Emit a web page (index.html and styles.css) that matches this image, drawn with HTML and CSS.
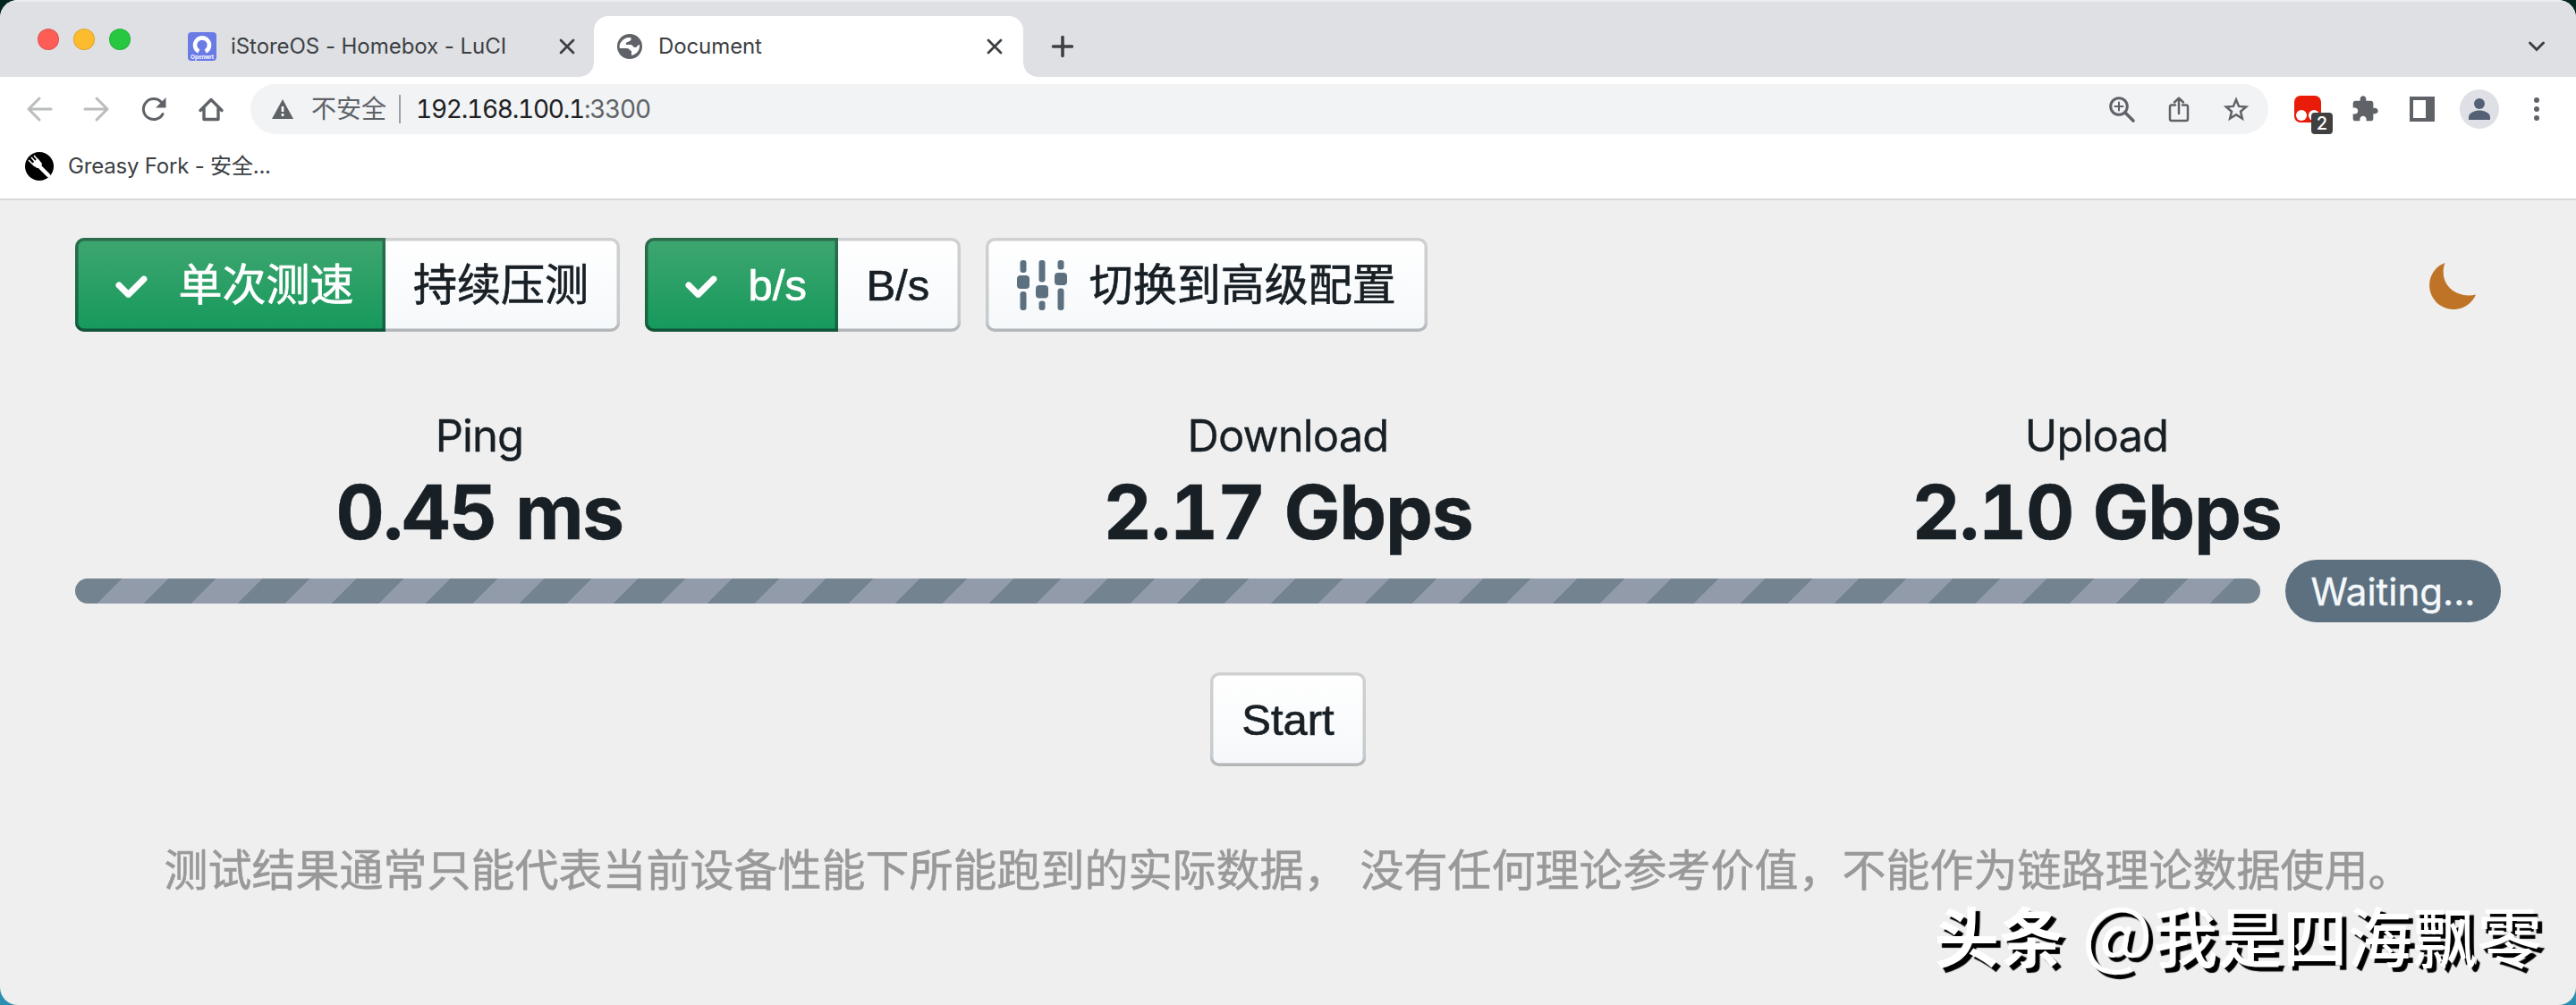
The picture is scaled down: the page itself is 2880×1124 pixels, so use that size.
FILE: index.html
```html
<!DOCTYPE html>
<html lang="zh-CN">
<head>
<meta charset="utf-8">
<title>Document</title>
<link rel="stylesheet" href="styles.css">
</head>
<body>
<div class="window">
  <header class="tabstrip">
    <div class="lights"><i class="light red"></i><i class="light amber"></i><i class="light green"></i></div>
    <div class="tab tab-first">
      <svg class="fav" width="32" height="32" viewBox="0 0 32 32"><rect width="32" height="32" rx="4" fill="#6b7be6"/><path d="M12.300 22.500A8 8 0 1 1 19.700 22.500" fill="none" stroke="#fff" stroke-width="4.600" transform="translate(0 -1)"/><text x="16" y="29.800" text-anchor="middle" font-family="Liberation Sans" font-weight="700" font-size="6.400" fill="#fff">Openwrt</text></svg>
      <span class="tab-title t1">iStoreOS - Homebox - LuCI</span>
      <svg class="close" width="20" height="20" viewBox="0 0 20 20"><path d="M3 3l14 14M17 3L3 17"/></svg>
    </div>
    <div class="tab tab-active">
      <svg class="fav globe" width="32" height="32" viewBox="0 0 32 32"><circle cx="16" cy="16" r="14" fill="#5f6368"/><path d="M14 6C9 7 5 11 4.500 16L5 18H13C16 18 16 21 18 21V26C23 25 27 21 27 16V14C25 13.500 25 17 22 17 19 17 20 14 17 14H12C11 11 14 11 16 10 18 9 18 7 17 6Z" fill="#fff"/></svg>
      <span class="tab-title t2">Document</span>
      <svg class="close" width="20" height="20" viewBox="0 0 20 20"><path d="M3 3l14 14M17 3L3 17"/></svg>
    </div>
    <svg class="plus" width="28" height="28" viewBox="0 0 28 28"><path d="M14 3.500v21M3.500 14h21"/></svg>
    <svg class="chevron" width="20" height="14" viewBox="0 0 20 14"><path d="M2.500 3L10 10.500 17.500 3"/></svg>
  </header>

  <div class="toolbar">
    <nav class="nav">
      <svg class="dim" viewBox="0 0 32 32"><path d="M29 16H4M16 4L4 16l12 12"/></svg>
      <svg class="dim" viewBox="0 0 32 32"><path d="M3 16h25M16 4l12 12-12 12"/></svg>
      <svg viewBox="0 0 32 32"><path d="M26 21.500A11.500 11.500 0 1 1 24.500 8.500"/><path d="M29.500 3v11.500H18z" fill="#5f6368" stroke="none"/></svg>
      <svg viewBox="0 0 32 32"><path d="M4 17.500L16 5.500l12 12M8 14.500V27.500H24V14.500" stroke-width="3.400"/></svg>
    </nav>
    <div class="omnibox">
      <svg class="warn" width="24" height="22" viewBox="0 0 24 22"><path d="M12 0L24 22H0z" fill="#5f6368"/><path d="M12 8v6M12 16v3" stroke="#fff" stroke-width="2.600"/></svg>
      <span class="insecure">不安全</span>
      <i class="sep"></i>
      <span class="url">192.168.100.1<b>:3300</b></span>
      <div class="box-icons">
        <svg viewBox="0 0 32 32"><circle cx="13" cy="13" r="9.300"/><path d="M20 20l9 9" stroke-width="3.600"/><path d="M13 8.500v9M8.500 13h9" stroke-width="2"/></svg>
        <svg viewBox="0 0 32 32"><path d="M12 11.500H8a2 2 0 0 0-2 2V27a2 2 0 0 0 2 2H24a2 2 0 0 0 2-2V13.500a2 2 0 0 0-2-2H20M16 21V4M11 8.500L16 3.700 21 8.500" stroke-width="2.500"/></svg>
        <svg viewBox="0 0 32 32"><path d="M16 5.500l3.100 7.400 8 .6-6.100 5.200 1.900 7.800-6.900-4.200-6.900 4.200 1.900-7.800-6.100-5.200 8-.6z" stroke-width="2.500" stroke-linejoin="miter"/></svg>
      </div>
    </div>
    <div class="ext">
      <div class="monkey">
        <svg viewBox="0 0 32 32"><rect x="1" y="1" width="30" height="30" rx="7" fill="#e81c08"/><circle cx="9" cy="23" r="6" fill="#fff"/><circle cx="23" cy="23" r="6" fill="#fff"/></svg>
        <span class="count">2</span>
      </div>
      <svg class="solid" viewBox="0 0 24 24"><path d="M20.500 11H19V7c0-1.100-.9-2-2-2h-4V3.500C13 2.120 11.880 1 10.500 1S8 2.120 8 3.500V5H4c-1.100 0-1.990.9-1.990 2v3.800H3.500c1.490 0 2.700 1.210 2.700 2.700s-1.210 2.700-2.700 2.700H2V20c0 1.100.9 2 2 2h3.800v-1.500c0-1.490 1.210-2.700 2.700-2.700 1.490 0 2.700 1.210 2.700 2.700V22H17c1.100 0 2-.9 2-2v-4h1.500c1.380 0 2.500-1.120 2.500-2.500S21.880 11 20.500 11z"/></svg>
      <svg class="solid" viewBox="0 0 32 32"><path fill-rule="evenodd" d="M2 2h28v28H2zM6 6v20h14V6z"/></svg>
      <svg class="avatar" viewBox="0 0 44 44"><circle cx="22" cy="22" r="22" fill="#dee0e5"/><circle cx="22" cy="16" r="6" fill="#546075"/><path d="M10 34v-3c0-5 7-7.500 12-7.500s12 2.500 12 7.500v3z" fill="#546075"/></svg>
      <svg class="dots" viewBox="0 0 32 32"><circle cx="16" cy="6" r="3"/><circle cx="16" cy="16" r="3"/><circle cx="16" cy="26" r="3"/></svg>
    </div>
  </div>

  <div class="bookmarks">
    <svg width="32" height="32" viewBox="0 0 32 32"><circle cx="16" cy="16" r="16" fill="#000"/><path d="M14 14L26 26" stroke="#fff" stroke-width="4.500" stroke-linecap="round"/><path d="M8 13l5 5 5-1 1-4-5-6" fill="#fff"/><path d="M4 9l7 7M7 6l7 8M10 4l7 8" stroke="#fff" stroke-width="1.600"/></svg>
    <span class="bm-title">Greasy Fork - 安全...</span>
  </div>

  <main class="page">
    <div class="controls">
      <div class="group">
        <button class="btn success"><svg class="ico" viewBox="0 0 16 16"><path d="M12 5c-.28 0-.53.110-.71.290L7 9.590l-2.290-2.300a1.003 1.003 0 0 0-1.420 1.420l3 3c.18.180.43.290.71.290s.53-.110.710-.290l5-5A1.003 1.003 0 0 0 12 5z"/></svg>单次测速</button>
        <button class="btn">持续压测</button>
      </div>
      <div class="group">
        <button class="btn success"><svg class="ico" viewBox="0 0 16 16"><path d="M12 5c-.28 0-.53.110-.71.290L7 9.590l-2.290-2.300a1.003 1.003 0 0 0-1.420 1.420l3 3c.18.180.43.290.71.290s.53-.110.710-.290l5-5A1.003 1.003 0 0 0 12 5z"/></svg>b/s</button>
        <button class="btn">B/s</button>
      </div>
      <button class="btn"><svg class="ico slate" viewBox="0 0 56 56"><rect x="3.500" y="0" width="7" height="14" rx="3"/><rect x="0" y="17" width="14" height="15" rx="4"/><rect x="3.500" y="35" width="7" height="21" rx="3"/><rect x="24.500" y="0" width="7" height="24.500" rx="3"/><rect x="21" y="28" width="14" height="14.500" rx="4"/><rect x="24.500" y="45.500" width="7" height="10.500" rx="3"/><rect x="45.500" y="0" width="7" height="10.500" rx="3"/><rect x="42" y="14" width="14" height="14" rx="4"/><rect x="45.500" y="31.500" width="7" height="24.500" rx="3"/></svg>切换到高级配置</button>
      <svg class="moon" viewBox="0 0 56 56"><path d="M20 2C12 28 34 44 56 39A28 28 0 1 1 20 2z"/></svg>
    </div>

    <section class="stats">
      <div class="stat"><div class="label">Ping</div><div class="value ping">0.45 ms</div></div>
      <div class="stat"><div class="label">Download</div><div class="value">2.17 Gbps</div></div>
      <div class="stat"><div class="label">Upload</div><div class="value">2.10 Gbps</div></div>
    </section>

    <div class="progress"><div class="bar"></div><span class="tag">Waiting...</span></div>
    <button class="btn start">Start</button>
    <p class="note">测试结果通常只能代表当前设备性能下所能跑到的实际数据， 没有任何理论参考价值，不能作为链路理论数据使用。</p>
  </main>
  <div class="watermark"><b>头条</b><span class="at">@</span><span>我是四海飘零</span></div>
</div>
</body>
</html>
```
FILE: styles.css
```css
* { box-sizing: border-box; }
body {
  margin: 0;
  width: 2880px;
  height: 1124px;
  overflow: hidden;
  background: linear-gradient(#04261f 50%, #2b8fb0 50%);
  font-family: Inter, "Noto Sans CJK SC", sans-serif;
}
svg { display: block; flex: none; }
.window {
  position: relative;
  display: flex;
  flex-direction: column;
  height: 1124px;
  border-radius: 20px;
  overflow: hidden;
  background: #efefef;
}

/* tab strip */
.tabstrip {
  display: flex;
  align-items: flex-end;
  height: 86px;
  background: #dee0e4;
  box-shadow: inset 0 2px 0 #ebecef;
}
.lights { display: flex; gap: 16px; width: 194px; padding-left: 42px; margin-bottom: 30px; }
.light { width: 24px; height: 24px; border-radius: 50%; border: 1px solid rgba(0, 0, 0, .12); }
.red { background: #fe5d56; }
.amber { background: #fdbc2d; }
.green { background: #27c840; }
.tab { display: flex; align-items: center; height: 68px; }
.tab-first { width: 470px; padding: 0 20px 0 16px; }
.tab-active {
  position: relative;
  width: 480px;
  padding: 0 22px 0 24px;
  border-radius: 16px 16px 0 0;
  background: #fff;
}
.tab-active::before, .tab-active::after {
  content: "";
  position: absolute;
  bottom: 0;
  width: 16px;
  height: 16px;
}
.tab-active::before { left: -16px; background: radial-gradient(circle at 0 0, transparent 15.500px, #fff 16px); }
.tab-active::after { right: -16px; background: radial-gradient(circle at 100% 0, transparent 15.500px, #fff 16px); }
.tab-title { font-size: 24px; line-height: 32px; color: #3c4043; margin-left: 16px; white-space: nowrap; }
.t1 { letter-spacing: -.05px; }
.t2 { letter-spacing: -.1px; }
.close { margin-left: auto; fill: none; stroke: #3c4043; stroke-width: 2.800; stroke-linecap: round; }
.plus { margin: 0 0 20px 30px; fill: none; stroke: #3c4043; stroke-width: 3.600; stroke-linecap: round; }
.chevron { margin: 0 34px 27px auto; fill: none; stroke: #3c4043; stroke-width: 3; stroke-linecap: round; }

/* toolbar */
.toolbar { display: flex; align-items: center; height: 72px; background: #fff; }
.nav { display: flex; gap: 32px; width: 280px; padding-left: 28px; }
.nav svg, .box-icons svg { width: 32px; height: 32px; fill: none; stroke: #5f6368; stroke-width: 3; stroke-linecap: round; stroke-linejoin: round; }
.nav svg.dim { stroke: #babcbe; }
.omnibox { display: flex; align-items: center; width: 2256px; height: 56px; padding: 0 20px 0 24px; border-radius: 28px; background: #f1f3f4; }
.insecure { margin-left: 20px; font-size: 28px; line-height: 40px; color: #5f6368; }
.sep { width: 2px; height: 32px; margin: 0 17px 0 14px; background: #9aa0a6; }
.url { font-size: 28px; line-height: 40px; letter-spacing: -1.250px; color: #202124; font-variant-numeric: tabular-nums; }
.url b { font-weight: 400; color: #5f6368; }
.box-icons { display: flex; gap: 32px; margin-left: auto; }
.ext { display: flex; align-items: center; margin-left: 28px; }
.monkey { position: relative; margin-right: 32px; }
.monkey svg, .solid, .dots { width: 32px; height: 32px; }
.count {
  position: absolute;
  left: 20px;
  top: 20px;
  width: 24px;
  height: 24px;
  border-radius: 4px;
  background: #404040;
  color: #fff;
  font: 500 20px/25px Inter, sans-serif;
  text-align: center;
}
.solid { margin-right: 32px; fill: #5f6368; }
.avatar { width: 44px; height: 44px; margin: 0 26px 0 -6px; }
.dots { fill: #5f6368; }

/* bookmarks bar */
.bookmarks {
  display: flex;
  align-items: center;
  height: 66px;
  padding: 0 28px 10px;
  background: #fff;
  border-bottom: 2px solid #d8d8da;
}
.bookmarks svg { margin-top: 1px; }
.bm-title { margin: 2px 0 0 16px; font-size: 24px; line-height: 32px; letter-spacing: -.200px; color: #3c4043; }

/* page */
.page { display: flex; flex-direction: column; flex: 1; padding: 42px 84px 0; color: #182026; }
.controls { display: flex; align-items: center; gap: 28px; }
.group { display: flex; }
.group .btn + .btn { margin-left: -3.500px; border-radius: 0 10px 10px 0; }
.group .btn:first-child { position: relative; border-radius: 10px 0 0 10px; }
.btn {
  display: flex;
  align-items: center;
  height: 105px;
  padding: 0 35px;
  border: 0;
  border-radius: 10px;
  background: linear-gradient(#fff, #f5f8fa);
  box-shadow: inset 0 0 0 3.500px rgba(16, 22, 26, .2), inset 0 -3.500px 0 rgba(16, 22, 26, .1);
  color: #182026;
  font: 49px/64px "Liberation Sans", "Noto Sans CJK SC", sans-serif;
  -webkit-text-stroke: .7px currentColor;
  white-space: nowrap;
}
.success {
  background: linear-gradient(#3fa670, #15995c);
  box-shadow: inset 0 0 0 3.500px rgba(16, 22, 26, .4), inset 0 -3.500px 0 rgba(16, 22, 26, .2);
  color: #fff;
}
.ico { width: 56px; height: 56px; margin-right: 24.500px; fill: #fff; }
.slate { fill: #5c7080; }
.moon { width: 54px; height: 54px; margin: 0 28px 0 auto; fill: #bf7326; }

.stats { display: grid; grid-template-columns: repeat(3, 1fr); margin-top: 85px; text-align: center; }
.label { font-size: 49px; line-height: 63px; letter-spacing: -.9px; -webkit-text-stroke: .3px currentColor; }
.value { font-size: 84px; line-height: 108px; font-weight: 700; letter-spacing: -1.200px; font-variant-numeric: tabular-nums; -webkit-text-stroke: .5px currentColor; }
.ping { letter-spacing: -1.500px; }

.progress { display: flex; align-items: center; gap: 28px; height: 70px; margin-top: -1px; }
.bar {
  flex: 1;
  height: 28px;
  border-radius: 14px;
  background: linear-gradient(-45deg, #929baa 25%, #73838f 25%, #73838f 50%, #929baa 50%, #929baa 75%, #73838f 75%) 0 0 / 105px 105px;
}
.tag { width: 241px; height: 70px; border-radius: 35px; background: #5c7080; color: #f5f8fa; font-size: 42px; line-height: 71px; text-align: center; -webkit-text-stroke: .4px currentColor; }
.start { align-self: center; margin-top: 56px; }
.note { margin: 85px 0 0; color: #999; font-size: 49px; line-height: 63px; text-align: center; white-space: nowrap; -webkit-text-stroke: .6px currentColor; }

.watermark {
  position: absolute;
  right: 38px;
  bottom: 41px;
  display: flex;
  align-items: baseline;
  font-family: "Noto Sans CJK SC", sans-serif;
  font-size: 72.500px;
  font-weight: 500;
  line-height: 76px;
  color: #fff;
  text-shadow: 5px 5px 1px #000;
}
.watermark b { margin-right: 20px; font-weight: 700; }
.at { font-size: 84px; line-height: 60px; font-weight: 400; }
```
